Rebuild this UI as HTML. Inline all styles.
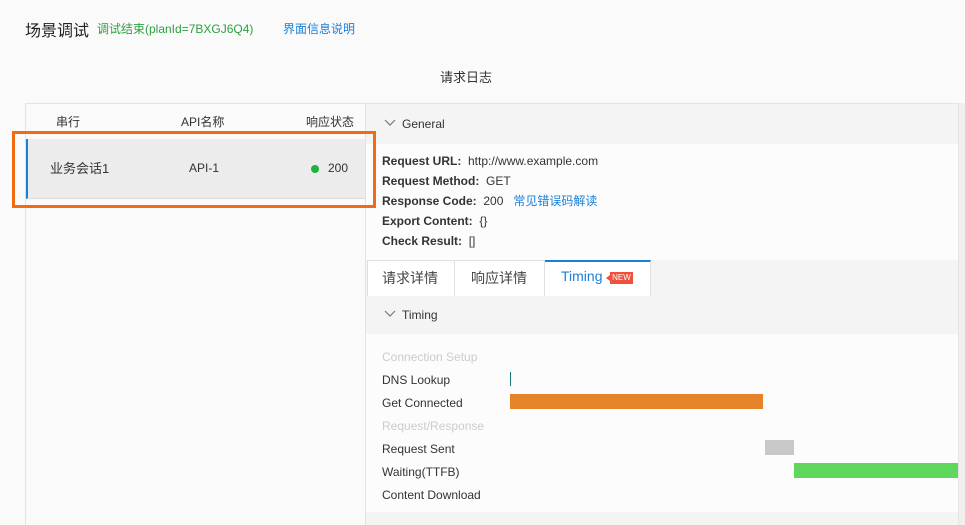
<!DOCTYPE html>
<html><head><meta charset="utf-8"><style>
*{margin:0;padding:0;box-sizing:border-box}
body{width:965px;height:525px;background:#fafafa;font-family:"Liberation Sans","Noto Sans CJK SC",sans-serif;font-size:12px;color:#333;position:relative;overflow:hidden}
.a{position:absolute;white-space:nowrap}
</style></head><body>
<div class="a" style="left:25px;top:17px;font-size:16px;color:#222">场景调试</div>
<div class="a" style="left:97px;top:20px;color:#2ea043">调试结束(planId=7BXGJ6Q4)</div>
<div class="a" style="left:283px;top:20px;color:#1a7fd8">界面信息说明</div>
<div class="a" style="left:440px;top:67px;font-size:13px;color:#333">请求日志</div>

<div class="a" style="left:25px;top:103px;width:341px;height:422px;border:1px solid #e3e3e3;border-bottom:none;background:#fafafa"></div>
<div class="a" style="left:56px;top:113px">串行</div>
<div class="a" style="left:181px;top:113px">API名称</div>
<div class="a" style="left:306px;top:113px">响应状态</div>
<div class="a" style="left:26px;top:139px;width:339px;height:60px;background:#ececec;border-left:2px solid #1a7fd8;border-bottom:1px solid #ddd"></div>
<div class="a" style="left:50px;top:158px;font-size:13px">业务会话1</div>
<div class="a" style="left:189px;top:161px">API-1</div>
<div class="a" style="left:311px;top:165px;width:8px;height:8px;border-radius:50%;background:#1db33c"></div>
<div class="a" style="left:328px;top:161px">200</div>

<div class="a" style="left:366px;top:103px;width:599px;height:422px;background:#f4f4f4;border-top:1px solid #e3e3e3"></div>
<div class="a" style="left:958px;top:103px;width:7px;height:422px;background:#efefef;border-left:1px solid #e5e5e5"></div>
<svg class="a" style="left:384px;top:119px" width="12" height="8"><path d="M1 1L6 6L11 1" fill="none" stroke="#777" stroke-width="1.2"/></svg>
<div class="a" style="left:402px;top:117px">General</div>
<div class="a" style="left:366px;top:144px;width:592px;height:116px;background:#fcfcfc"></div>
<div class="a" style="left:382px;top:151px;line-height:20px"><b>Request URL:</b>&nbsp; http://www.example.com<br><b>Request Method:</b>&nbsp; GET<br><b>Response Code:</b>&nbsp; 200 &nbsp; <span style="color:#1a7fd8">常见错误码解读</span><br><b>Export Content:</b>&nbsp; {}<br><b>Check Result:</b>&nbsp; []</div>

<div class="a" style="left:367px;top:260px;width:88px;height:36px;background:#fff;border:1px solid #e0e0e0;border-bottom:none"></div>
<div class="a" style="left:382px;top:268px;font-size:14px;color:#444">请求详情</div>
<div class="a" style="left:455px;top:260px;width:90px;height:36px;background:#fff;border:1px solid #e0e0e0;border-left:none;border-bottom:none"></div>
<div class="a" style="left:471px;top:268px;font-size:14px;color:#444">响应详情</div>
<div class="a" style="left:545px;top:260px;width:106px;height:36px;background:#fff;border-top:2px solid #1a7fd8;border-right:1px solid #e0e0e0"></div>
<div class="a" style="left:561px;top:268px;font-size:14px;color:#1a7fd8">Timing</div>
<div class="a" style="left:610px;top:272px;width:23px;height:12px;background:#f0503c;color:#fff;font-size:8px;line-height:12px;text-align:center">NEW</div>
<div class="a" style="left:606px;top:275px;width:0;height:0;border:3px solid transparent;border-right:4px solid #f0503c;border-left:none"></div>

<svg class="a" style="left:384px;top:310px" width="12" height="8"><path d="M1 1L6 6L11 1" fill="none" stroke="#777" stroke-width="1.2"/></svg>
<div class="a" style="left:402px;top:308px">Timing</div>
<div class="a" style="left:366px;top:334px;width:592px;height:178px;background:#fcfcfc"></div>
<div class="a" style="left:382px;top:346px;line-height:23px">
<span style="color:#ccc">Connection Setup</span><br>DNS Lookup<br>Get Connected<br><span style="color:#ccc">Request/Response</span><br>Request Sent<br>Waiting(TTFB)<br>Content Download</div>
<div class="a" style="left:510px;top:372px;width:1px;height:14px;background:#1a7a7a"></div>
<div class="a" style="left:510px;top:394px;width:253px;height:15px;background:#e5832b"></div>
<div class="a" style="left:765px;top:440px;width:29px;height:15px;background:#c8c8c8"></div>
<div class="a" style="left:794px;top:463px;width:164px;height:15px;background:#5fd65c"></div>

<div class="a" style="left:12px;top:131px;width:364px;height:77px;border:3px solid #f26b12"></div>
</body></html>
